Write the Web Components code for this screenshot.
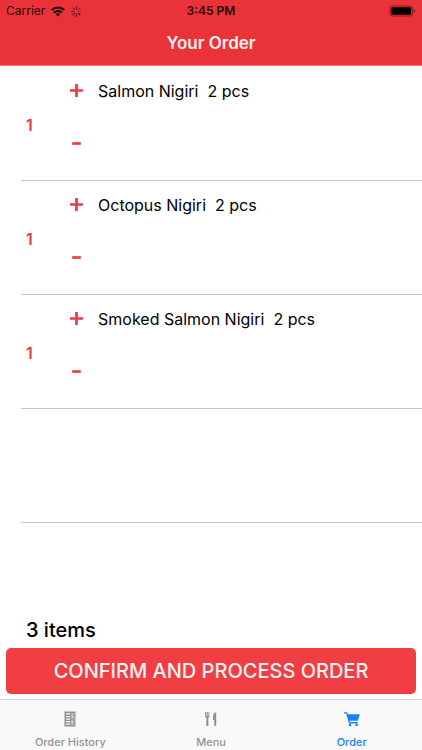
<!DOCTYPE html>
<html lang="en">
<head>
<meta charset="utf-8">
<meta name="viewport" content="width=device-width, initial-scale=1">
<title>Your Order</title>
<style>
  body { margin: 0; background: #fff; color: #000; font-family: Inter, "Liberation Sans", sans-serif; }
</style>
</head>
<body>
<order-screen></order-screen>
<script>
const define = (name, html, setup) => customElements.define(name, class extends HTMLElement {
  constructor() {
    super();
    this.attachShadow({ mode: 'open' }).innerHTML = html;
  }
  connectedCallback() { if (setup) setup(this, this.shadowRoot); }
});

define('status-bar', `
  <style>
    :host { display: grid; grid-template-columns: 1fr auto 1fr; align-items: center; height: 22px; padding: 0 6px; font-size: 12px; line-height: 16px; color: #2a0507; }
    .left { display: flex; align-items: center; gap: 6px; }
    .time { font-weight: 600; font-size: 12px; }
    .battery { justify-self: end; }
    svg { display: block; }
  </style>
  <div class="left">
    <span>Carrier</span>
    <svg width="14" height="11" viewBox="0 0 14 11" fill="none" stroke="#190001" stroke-width="2.2">
      <path d="M.8 4a9 9 0 0 1 12.4 0M3.1 6.7a5.6 5.6 0 0 1 7.8 0"/>
      <path d="M7 10.4 4.9 8.3a3 3 0 0 1 4.2 0z" fill="#190001" stroke="none"/>
    </svg>
    <svg width="11" height="11" viewBox="0 0 11 11" stroke-width="1.2" stroke-linecap="round">
      <path d="M5.5.7v2.2M2.1 2.1l1.6 1.6M.7 5.5h2.2" stroke="#7c161b"/>
      <path d="M2.1 8.9l1.6-1.6M5.5 8.1v2.2M7.3 7.3l1.6 1.6" stroke="#4a0a0e"/>
      <path d="M8.1 5.5h2.2M7.3 3.7l1.6-1.6" stroke="#a31e24"/>
    </svg>
  </div>
  <span class="time">3:45 PM</span>
  <svg class="battery" width="27" height="12" viewBox="0 0 27 12">
    <rect x="1" y="1" width="22.5" height="10" rx="2.4" fill="none" stroke="#8c1a20"/>
    <rect x="2.3" y="2.3" width="19.9" height="7.4" rx="1" fill="#000"/>
    <path d="M24.8 4.2q1.5.5 1.5 1.8t-1.5 1.8z" fill="#8c1a20"/>
  </svg>`);

define('nav-header', `
  <style>
    :host { display: block; background: #e93338; border-bottom: 1px solid #f0777a; }
    h1 { margin: 0; font-size: 17px; line-height: 43px; font-weight: 600; text-align: center; color: #fff0f0; }
  </style>
  <status-bar></status-bar>
  <h1><slot></slot></h1>`);

define('order-row', `
  <style>
    :host { display: block; box-sizing: border-box; height: 114px; margin-left: 21px; border-bottom: 1px solid #c8c8ca; }
    .row { display: grid; grid-template-columns: 32px 45px 1fr; height: 100%; }
    .count { align-self: center; padding: 3px 0 0 5px; font-size: 16px; line-height: 20px; font-weight: 600; color: #e93b40; }
    .stepper { display: flex; flex-direction: column; gap: 20px; padding: 8px 0 0 1px; align-items: center; }
    button { display: grid; place-items: center; width: 32px; height: 32px; border: 0; padding: 0; background: none; }
    .name { padding-top: 13px; font-size: 16px; line-height: 22px; white-space: pre; }
    :host([empty]) .row { display: none; }
  </style>
  <div class="row">
    <output class="count">1</output>
    <div class="stepper">
      <button type="button" aria-label="Add one"><svg width="14" height="14" viewBox="0 0 14 14" stroke="#e93b40" stroke-width="2.7"><path d="M1 6.5h13M7.5 0v13"/></svg></button>
      <button type="button" aria-label="Remove one"><svg width="14" height="14" viewBox="0 0 14 14" stroke="#e93b40" stroke-width="2.7"><path d="M3.2 7.5h8.6"/></svg></button>
    </div>
    <span class="name"><slot></slot></span>
  </div>`);

define('order-summary', `
  <style>
    :host { display: block; padding: 0 6px 5px; }
    h2 { margin: 0 0 4px 20px; font-size: 20px; line-height: 28px; font-weight: 500; }
    button { display: block; width: 100%; height: 46px; padding: 0; border: 0; border-radius: 5px; background: #f03e43; color: #fff2f2; font-family: inherit; font-size: 20px; line-height: 24px; font-weight: 500; }
  </style>
  <h2><slot></slot></h2>
  <button type="button">CONFIRM AND PROCESS ORDER</button>`);

const icons = {
  history: '<path fill-rule="evenodd" d="M2.5.5h11v15h-11zM4 2.2v1.4h4.2V2.2zM4 5v1.2h4.2V5zM4 7.5v1.2h4.2V7.5zM4 10v1.2h4.2V10zM4 12.5v1.2h4.2v-1.2zM9.6 2.2v5.6h1V2.2zM9.6 9v4.7h1V9zM11.7 2.2v1.2h.8V2.2zM11.7 5v1.2h.8V5zM11.7 7.5v1.2h.8V7.5zM11.7 10v1.2h.8V10zM11.7 12.5v1.2h.8v-1.2z"/>',
  menu: '<path d="M2.1 1h1v4.1h.6V1h1.1v4.1h.6V1h1v4.1q0 1.5-1.2 2.1l.3 6.7q0 1.1-1.2 1.1t-1.2-1.1l.3-6.7Q2.1 6.6 2.1 5.1zM13.2 1v12.9q0 1.1-1 1.1t-1-1.1V9.1H10V5.6Q10 2 13.2 1z"/>',
  order: '<path d="M0 1.2h3.2l.7 2h11.9l-2 6.6H5.6l.4 1.2h7.8v1.4H5L2.2 2.6H0z"/><circle cx="6" cy="14" r="1.3"/><circle cx="12.6" cy="14" r="1.3"/>'
};

define('tab-item', `
  <style>
    :host { display: block; color: #929292; }
    :host([active]) { color: #1680f5; }
    a { display: flex; flex-direction: column; align-items: center; gap: 8px; padding: 11px 0 1px; color: inherit; text-decoration: none; font-size: 11px; line-height: 14px; font-weight: 500; }
    svg { display: block; fill: currentColor; }
  </style>
  <a href="#"><svg width="16" height="16" viewBox="0 0 16 16" aria-hidden="true"></svg><span><slot></slot></span></a>`,
  (el, root) => {
    root.querySelector('svg').innerHTML = icons[el.getAttribute('icon')];
    if (el.hasAttribute('active')) root.querySelector('a').setAttribute('aria-current', 'page');
  });

define('tab-bar', `
  <style>
    :host { display: block; background: #f9f9f9; border-top: 1px solid #d9d5dc; }
    nav { display: grid; grid-template-columns: repeat(3, 1fr); }
  </style>
  <nav><slot></slot></nav>`);

define('order-screen', `
  <style>
    :host { display: flex; flex-direction: column; min-height: 100vh; }
    main { flex: 1; padding-top: 1px; }
  </style>
  <nav-header>Your Order</nav-header>
  <main>
    <order-row>Salmon Nigiri  2 pcs</order-row>
    <order-row>Octopus Nigiri  2 pcs</order-row>
    <order-row>Smoked Salmon Nigiri  2 pcs</order-row>
    <order-row empty></order-row>
  </main>
  <order-summary>3 items</order-summary>
  <tab-bar>
    <tab-item icon="history">Order History</tab-item>
    <tab-item icon="menu">Menu</tab-item>
    <tab-item icon="order" active>Order</tab-item>
  </tab-bar>`);
</script>
</body>
</html>
